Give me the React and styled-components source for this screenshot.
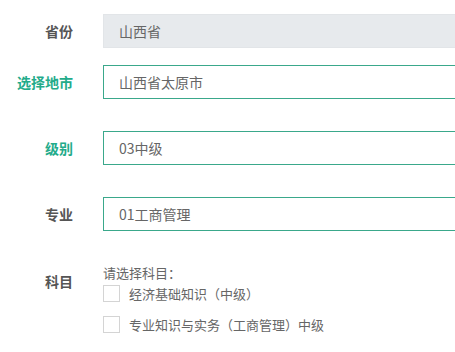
import React from "react";
import styled, { createGlobalStyle } from "styled-components";

const GlobalStyle = createGlobalStyle`
  html, body {
    margin: 0;
    padding: 0;
    background: #fff;
    overflow: hidden;
    font-family: "Noto Sans CJK SC", "Noto Sans", sans-serif;
  }
`;

const fields = [
  { label: "省份", value: "山西省", disabled: true, active: false, gap: 17 },
  { label: "选择地市", value: "山西省太原市", active: true, gap: 32 },
  { label: "级别", value: "03中级", active: true, gap: 32 },
  { label: "专业", value: "01工商管理", active: false, gap: 33 },
];

const subjects = ["经济基础知识（中级）", "专业知识与实务（工商管理）中级"];

export default function App() {
  return (
    <>
      <GlobalStyle />
      <Form>
        {fields.map((f) => (
          <Row key={f.label} $gap={f.gap}>
            <Label $active={f.active}>{f.label}</Label>
            <Input $disabled={f.disabled}>{f.value}</Input>
          </Row>
        ))}
        <Row $gap={0}>
          <Label>科目</Label>
          <Subjects>
            <Hint>请选择科目：</Hint>
            {subjects.map((s) => (
              <Check key={s}>
                <Box />
                <span>{s}</span>
              </Check>
            ))}
          </Subjects>
        </Row>
      </Form>
    </>
  );
}

const Form = styled.div`
  padding-top: 14px;
  display: flex;
  flex-direction: column;
  width: 455px;
  height: 352px;
  box-sizing: border-box;
  overflow: hidden;
`;

const Row = styled.div`
  display: flex;
  align-items: flex-start;
  gap: 30px;
  min-width: 0;
  margin-bottom: ${(p) => p.$gap}px;
`;

const Label = styled.div`
  width: 73px;
  flex-shrink: 0;
  text-align: right;
  line-height: 34px;
  font-size: 14px;
  font-weight: 700;
  color: ${(p) => (p.$active ? "#23ab8a" : "#555")};
`;

const Input = styled.div`
  flex: 1;
  margin-right: -10px;
  height: 34px;
  box-sizing: border-box;
  padding: 0 15px;
  font-size: 14px;
  line-height: 32px;
  color: #666;
  background: ${(p) => (p.$disabled ? "#e7eaed" : "#fff")};
  border: 1px solid ${(p) => (p.$disabled ? "#e2e5e8" : "#3aa88b")};
  border-right: none;
`;

const Subjects = styled.div`
  display: flex;
  flex-direction: column;
`;

const Hint = styled.div`
  font-size: 13px;
  line-height: 18px;
  color: #666;
`;

const Check = styled.label`
  display: flex;
  align-items: center;
  gap: 9px;
  height: 17px;
  margin-top: 3px;
  margin-bottom: 11px;
  font-size: 13px;
  color: #666;
`;

const Box = styled.span`
  width: 17px;
  height: 17px;
  box-sizing: border-box;
  border: 1px solid #d4d4d4;
  background: #fff;
`;
